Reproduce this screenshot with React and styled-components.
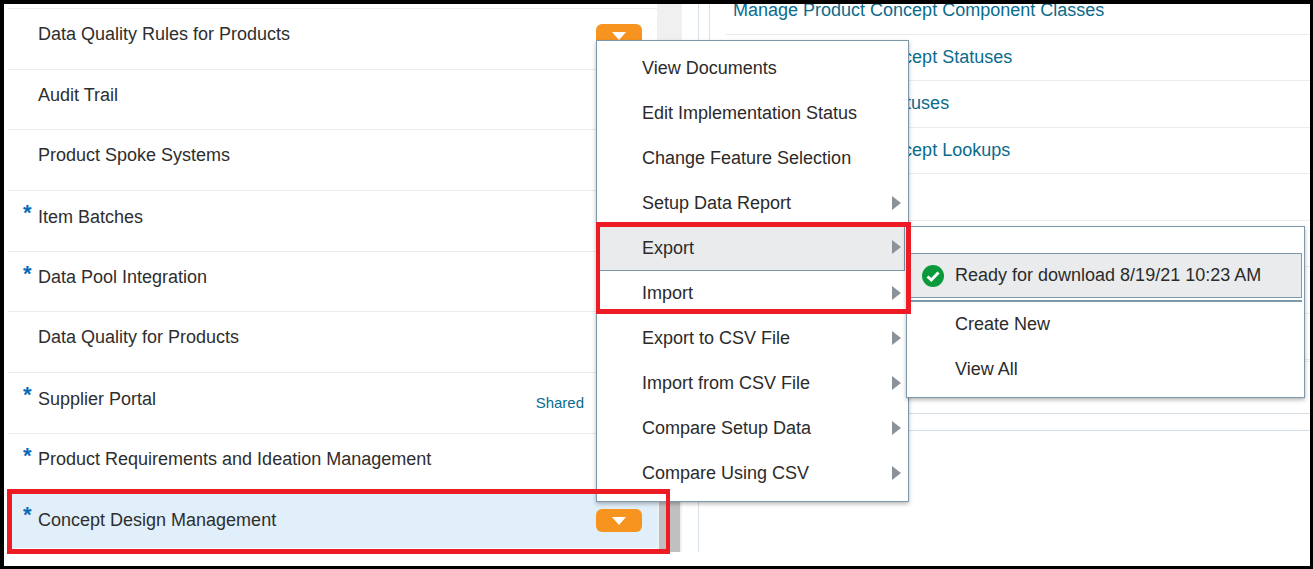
import React from 'react';
import styled, { createGlobalStyle } from 'styled-components';

const Global = createGlobalStyle`
  html, body { margin: 0; padding: 0; background: #fff; }
  body { font-family: "Liberation Sans", Arial, sans-serif; }
`;

const Frame = styled.div`
  position: relative;
  box-sizing: border-box;
  width: 1313px;
  height: 569px;
  overflow: hidden;
  border-style: solid;
  border-color: #000;
  border-width: 4px 3px 3px 4px;
  background: #fff;
  display: flex;
  align-items: flex-start;
`;

const LeftPanel = styled.div`
  width: 649px;
  margin-left: 4px;
  padding-top: 4px;
  flex: none;
`;

const Row = styled.div`
  box-sizing: border-box;
  height: ${p => (p.$selected ? '55px' : '60.67px')};
  margin-right: ${p => (p.$selected ? '-2px' : '0')};
  display: flex;
  align-items: flex-start;
  padding: 14px ${p => (p.$selected ? '17px' : '15px')} 0 15px;
  border-top: ${p => (p.$selected ? '0' : '1px solid #ebebeb')};
  background: ${p => (p.$selected ? '#e1effb' : 'transparent')};
  color: #2e2e2e;
  font-size: 18px;
  line-height: 22px;
`;

const Star = styled.span`
  width: 15px;
  flex: none;
  color: #0a6ab4;
  font-size: 22px;
  font-weight: 700;
  line-height: 16px;
`;

const RowLabel = styled.span`
  flex: 1;
  padding-left: ${p => (p.$starred ? '0' : '15px')};
  margin-top: ${p => (p.$selected ? '2px' : p.$starred ? '0.8px' : '0')};
`;

const Shared = styled.span`
  margin: 5px 58px 0 0;
  color: #0b6b8d;
  font-size: 15px;
  line-height: 22px;
`;

const ActionButton = styled.button`
  width: 46px;
  height: 23px;
  margin-top: ${p => (p.$selected ? '2px' : '1px')};
  padding: 0;
  border: 0;
  border-radius: 6px;
  background: #f79420;
  display: flex;
  align-items: center;
  justify-content: center;
  flex: none;
`;

const Caret = styled.span`
  width: 0;
  height: 0;
  border-style: solid;
  border-width: 8px 7.5px 0 7.5px;
  border-color: #fff transparent transparent transparent;
`;

const ScrollTrack = styled.div`
  width: 25px;
  height: 548px;
  flex: none;
  background: #f0f0f0;
  display: flex;
  flex-direction: column;
  justify-content: flex-end;
`;

const ScrollThumb = styled.div`
  width: 21px;
  margin-left: 2px;
  height: 63px;
  background: #c0c0c0;
`;

const RightPanel = styled.div`
  flex: 1;
  height: 548px;
  margin-left: 16px;
  border-left: 1px solid #d6dfe6;
  padding-left: 10px;
`;

const RightInner = styled.div`
  height: 427px;
  border-left: 1px solid #d6dfe6;
  padding-left: 15px;
`;

const LinkList = styled.div`
  margin-top: -16px;
`;

const LinkRow = styled.div`
  box-sizing: border-box;
  height: 46.5px;
  display: flex;
  align-items: center;
  padding: 0 0 0 8px;
  border-bottom: 1px solid #ebebeb;
  color: #0b6b8d;
  font-size: 18px;
`;

const SectionLine = styled.div`
  height: ${p => p.$h}px;
  box-sizing: border-box;
  border-bottom: 1px solid ${p => p.$color};
`;

const Menu = styled.div`
  position: absolute;
  box-sizing: border-box;
  background: #fff;
  border: 1px solid #7d97ab;
  box-shadow: 0 2px 4px rgba(0, 0, 0, 0.28);
  color: #2b2b2b;
  font-size: 18px;
`;

const MainMenu = styled(Menu)`
  left: 592px;
  top: 36px;
  width: 313px;
  height: 462px;
  padding-top: 5px;
`;

const SubMenu = styled(Menu)`
  left: 902px;
  top: 222px;
  width: 399px;
  height: 172px;
  padding-top: 26px;
`;

const MenuItem = styled.div`
  position: relative;
  box-sizing: border-box;
  height: 45px;
  display: flex;
  align-items: center;
  padding-left: 45px;
  margin-right: ${p => (p.$active ? '3px' : '0')};
  background: ${p => (p.$active ? '#e9ebed' : 'transparent')};
  border-bottom: ${p => (p.$active ? '1px solid #7d97ab' : '0')};
  border-right: ${p => (p.$active ? '1px solid #7d97ab' : '0')};
`;

const Arrow = styled.span`
  position: absolute;
  right: ${p => (p.$active ? '3px' : '7px')};
  top: 50%;
  margin-top: -8px;
  width: 0;
  height: 0;
  border-style: solid;
  border-width: 7px 0 7px 9px;
  border-color: transparent transparent transparent #8b9299;
`;

const SubItem = styled.div`
  box-sizing: border-box;
  height: 45px;
  display: flex;
  align-items: center;
  padding-left: 48px;
`;

const ReadyItem = styled.div`
  box-sizing: border-box;
  height: 45px;
  display: flex;
  align-items: center;
  gap: 11px;
  padding-left: 15px;
  margin-right: 2px;
  background: #e9ebed;
  border: 1px solid #7d97ab;
  border-left: 0;
`;

const MenuDivider = styled.div`
  height: 2px;
  margin: 2px 2px 0 0;
  background: #7d97ab;
`;

const Annotation = styled.div`
  position: absolute;
  box-sizing: border-box;
  border: solid #ed1c24;
  border-width: ${p => p.$b};
  left: ${p => p.$l}px;
  top: ${p => p.$t}px;
  width: ${p => p.$w}px;
  height: ${p => p.$h}px;
`;

const CheckIcon = () => (
  <svg width="22" height="22" viewBox="0 0 22 22" aria-hidden="true">
    <circle cx="11" cy="11" r="11" fill="#0a9a3c" />
    <path d="M5.5 11.5 L9.3 15 L16.5 7.5" fill="none" stroke="#fff" strokeWidth="3" />
  </svg>
);

const rows = [
  { label: 'Data Quality Rules for Products', button: true },
  { label: 'Audit Trail' },
  { label: 'Product Spoke Systems' },
  { label: 'Item Batches', star: true },
  { label: 'Data Pool Integration', star: true },
  { label: 'Data Quality for Products' },
  { label: 'Supplier Portal', star: true, shared: true },
  { label: 'Product Requirements and Ideation Management', star: true },
  { label: 'Concept Design Management', star: true, button: true, selected: true },
];

const links = [
  'Manage Product Concept Component Classes',
  'Manage Product Concept Statuses',
  'Manage Proposal Statuses',
  'Manage Product Concept Lookups',
  '',
  '',
  '',
  '',
];

const menu = [
  ['View Documents', false],
  ['Edit Implementation Status', false],
  ['Change Feature Selection', false],
  ['Setup Data Report', true],
  ['Export', true, true],
  ['Import', true],
  ['Export to CSV File', true],
  ['Import from CSV File', true],
  ['Compare Setup Data', true],
  ['Compare Using CSV', true],
];

export default function App() {
  return (
    <>
      <Global />
      <Frame>
        <LeftPanel>
          {rows.map(r => (
            <Row key={r.label} $selected={r.selected}>
              {r.star && <Star>*</Star>}
              <RowLabel $starred={r.star} $selected={r.selected}>{r.label}</RowLabel>
              {r.shared && <Shared>Shared</Shared>}
              {r.button && (
                <ActionButton aria-label="Actions" $selected={r.selected}>
                  <Caret />
                </ActionButton>
              )}
            </Row>
          ))}
        </LeftPanel>
        <ScrollTrack>
          <ScrollThumb />
        </ScrollTrack>
        <RightPanel>
          <RightInner>
            <LinkList>
              {links.map((l, i) => (
                <LinkRow key={i}>{l}</LinkRow>
              ))}
            </LinkList>
            <SectionLine $h={2} $color="#ebebeb" />
            <SectionLine $h={52} $color="#d6dfe6" />
            <SectionLine $h={17} $color="#d6dfe6" />
          </RightInner>
        </RightPanel>
        <MainMenu>
          {menu.map(([label, arrow, active]) => (
            <MenuItem key={label} $active={active}>
              {label}
              {arrow && <Arrow $active={active} />}
            </MenuItem>
          ))}
        </MainMenu>
        <SubMenu>
          <ReadyItem>
            <CheckIcon />
            Ready for download 8/19/21 10:23 AM
          </ReadyItem>
          <MenuDivider />
          <SubItem>Create New</SubItem>
          <SubItem>View All</SubItem>
        </SubMenu>
        <Annotation $l={592} $t={218} $w={315} $h={92} $b="5px 5px 5px 4px" />
        <Annotation $l={3} $t={485} $w={663} $h={65} $b="5px 4px 5px 5px" />
      </Frame>
    </>
  );
}
